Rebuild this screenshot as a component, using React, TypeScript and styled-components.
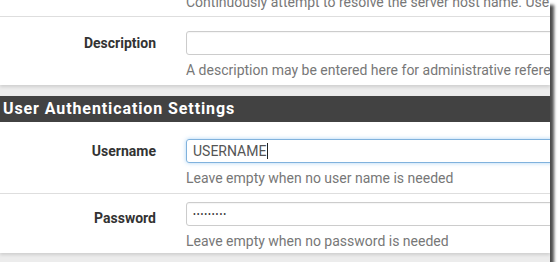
import React from "react";
import styled, { createGlobalStyle } from "styled-components";

const Global = createGlobalStyle`
  html, body { margin: 0; padding: 0; background: #ffffff; }
  body { font-family: Roboto, "Liberation Sans", sans-serif; }
`;

const Frame = styled.div`
  width: 550px;
  height: 262px;
  overflow: hidden;
  background: #ececec;
  display: flex;
  flex-direction: column;
  box-shadow: 4px 5px 3px rgba(0, 0, 0, 0.7);
`;

const Panel = styled.section`
  background: #ffffff;
  box-shadow: 0 2px 3px rgba(0, 0, 0, 0.12);
  display: flex;
  flex-direction: column;
`;

const Gap = styled.div`
  height: 11px;
  flex: none;
`;

const Header = styled.h2`
  margin: 0;
  height: 26px;
  background: #424242;
  color: #ffffff;
  font-size: 16px;
  font-weight: 700;
  letter-spacing: 0.9px;
  line-height: 26px;
  padding-left: 3px;
  white-space: nowrap;
`;

const TopRow = styled.div`
  display: flex;
  height: 17px;
  box-sizing: border-box;
  padding-left: 186px;
  border-bottom: 1px solid #dedede;
`;

const Row = styled.div<{ $padTop: number; $padBottom: number; $divider?: boolean }>`
  display: grid;
  grid-template-columns: 156px 1fr;
  column-gap: 30px;
  padding-top: ${(p) => p.$padTop}px;
  padding-bottom: ${(p) => p.$padBottom}px;
  border-top: ${(p) => (p.$divider ? "1px solid #dedede" : "none")};
`;

const Label = styled.label<{ $drop?: number }>`
  font-size: 14px;
  font-weight: 700;
  color: #333333;
  text-align: right;
  height: 24px;
  line-height: 24px;
  margin-top: ${(p) => p.$drop ?? 0}px;
  white-space: nowrap;
`;

const Control = styled.div`
  display: flex;
  flex-direction: column;
  gap: 6px;
  min-width: 0;
`;

const InputBox = styled.div<{ $focus?: boolean }>`
  box-sizing: border-box;
  width: 420px;
  height: 24px;
  border: 1px solid ${(p) => (p.$focus ? "#80b2dd" : "#cccccc")};
  border-radius: 3px;
  box-shadow: ${(p) =>
    p.$focus ? "0 0 4px rgba(102, 175, 233, 0.55)" : "inset 0 1px 1px rgba(0,0,0,0.04)"};
  padding: 0 6px;
  font-size: 14px;
  line-height: 22px;
  color: #555555;
  display: flex;
  align-items: center;
  white-space: nowrap;
`;

const Caret = styled.span`
  display: inline-block;
  width: 1px;
  height: 16px;
  background: #222;
  margin-left: 1px;
`;

const Dots = styled.span`
  font-size: 8.5px;
  letter-spacing: 0.9px;
  color: #333;
`;

const Help = styled.div<{ $shift?: number }>`
  font-size: 14px;
  line-height: 18px;
  color: #777777;
  white-space: nowrap;
  margin-top: ${(p) => p.$shift ?? 0}px;
`;

export default function App() {
  return (
    <>
      <Global />
      <Frame>
        <Panel>
          <TopRow>
            <Help $shift={-7}>
              Continuously attempt to resolve the server host name. Useful when communicating with a server
            </Help>
          </TopRow>
          <Row $padTop={14} $padBottom={6}>
            <Label>Description</Label>
            <Control>
              <InputBox />
              <Help>A description may be entered here for administrative reference (not parsed).</Help>
            </Control>
          </Row>
        </Panel>
        <Gap />
        <Panel>
          <Header>User Authentication Settings</Header>
          <Row $padTop={17} $padBottom={6}>
            <Label>Username</Label>
            <Control>
              <InputBox $focus>
                USERNAME
                <Caret />
              </InputBox>
              <Help>Leave empty when no user name is needed</Help>
            </Control>
          </Row>
          <Row $padTop={8} $padBottom={3} $divider>
            <Label $drop={4}>Password</Label>
            <Control>
              <InputBox>
                <Dots>•••••••••</Dots>
              </InputBox>
              <Help>Leave empty when no password is needed</Help>
            </Control>
          </Row>
        </Panel>
      </Frame>
    </>
  );
}
